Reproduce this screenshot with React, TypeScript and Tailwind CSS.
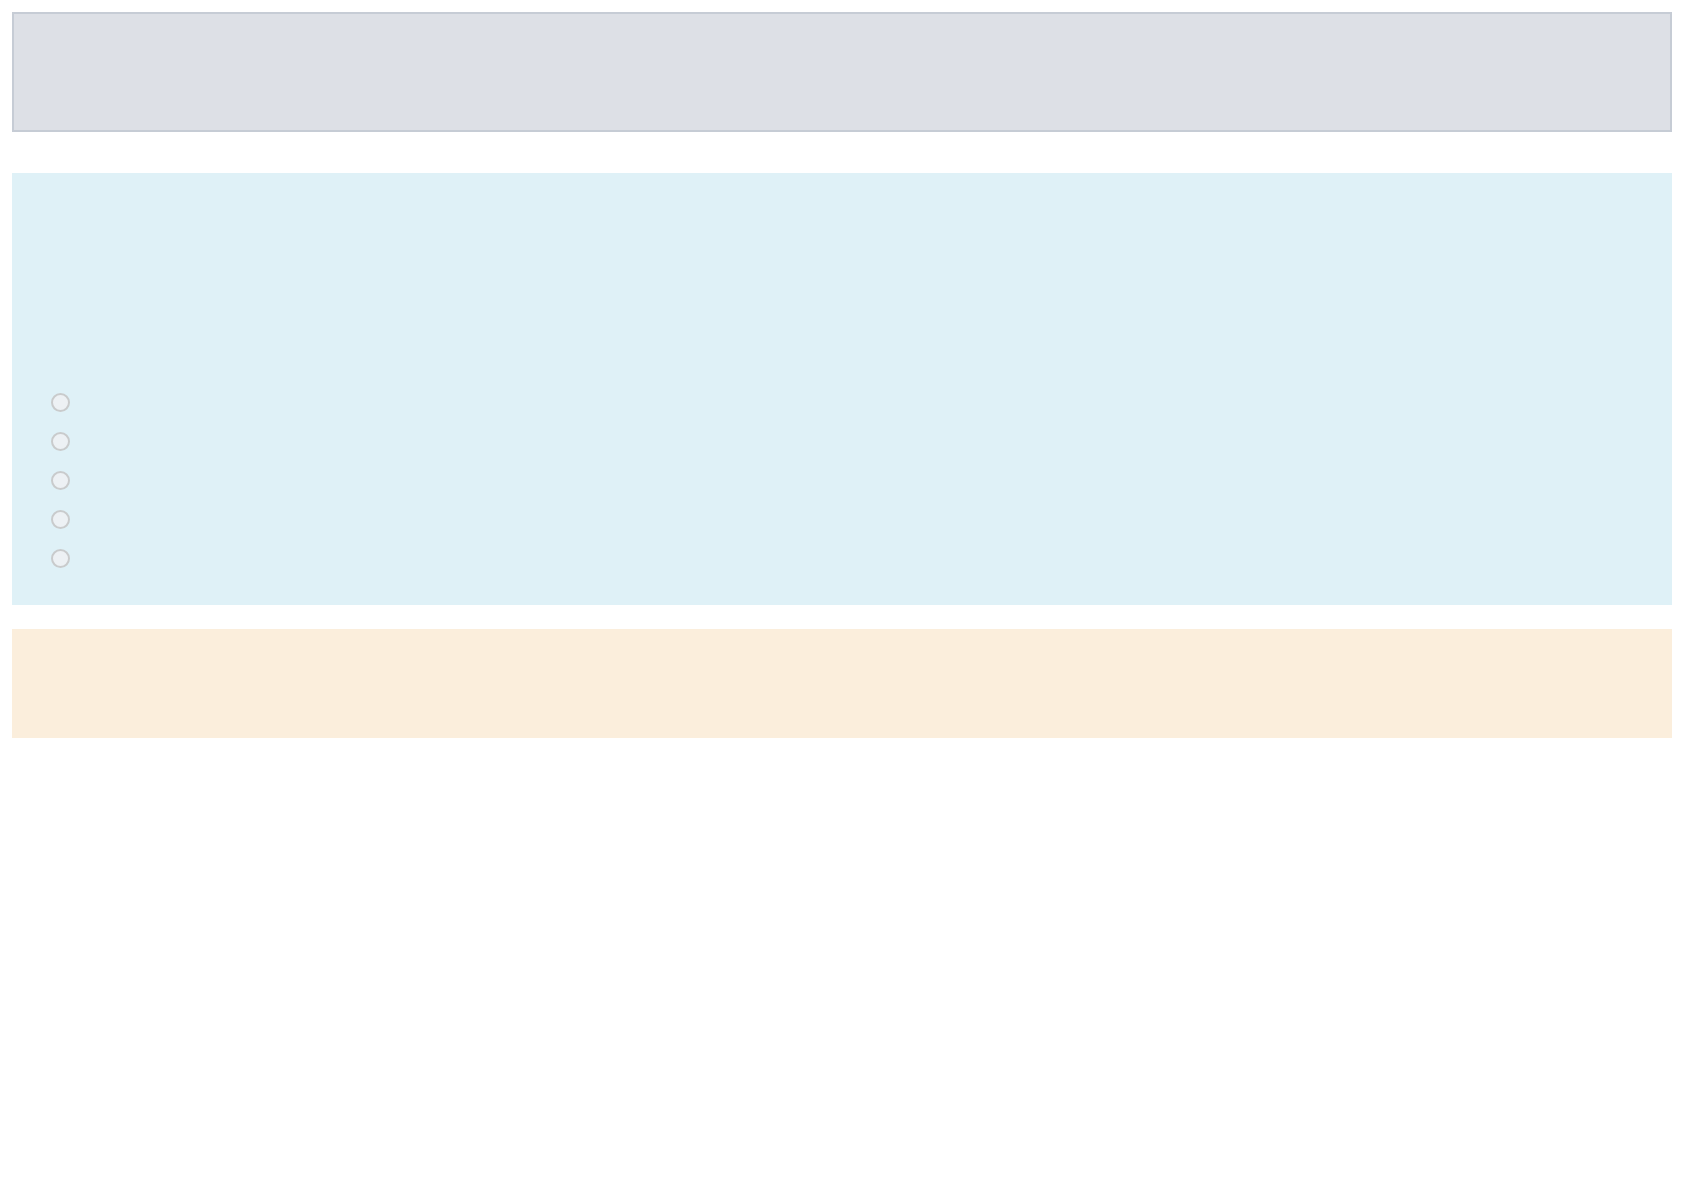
import React from "react";

const options = ["a", "b", "c", "d", "e"];

export default function App() {
  return (
    <div className="min-h-screen bg-white p-3 font-['Liberation_Sans',sans-serif]">
      {/* header placeholder */}
      <div className="h-[120px] border-2 border-[#c6ccd5] bg-[#dde0e6]"></div>

      {/* question panel */}
      <section className="mt-[41px] h-[432px] bg-[#dff1f7] pl-[39px] pt-[220px]">
        <div className="flex flex-col gap-5">
          {options.map((o) => (
            <div key={o} className="h-[19px] w-[19px] rounded-full border-2 border-[#c9cbcc] bg-[#edf1f4]"></div>
          ))}
        </div>
      </section>

      {/* footer note */}
      <div className="mt-6 h-[109px] bg-[#fbeedc]"></div>
    </div>
  );
}
